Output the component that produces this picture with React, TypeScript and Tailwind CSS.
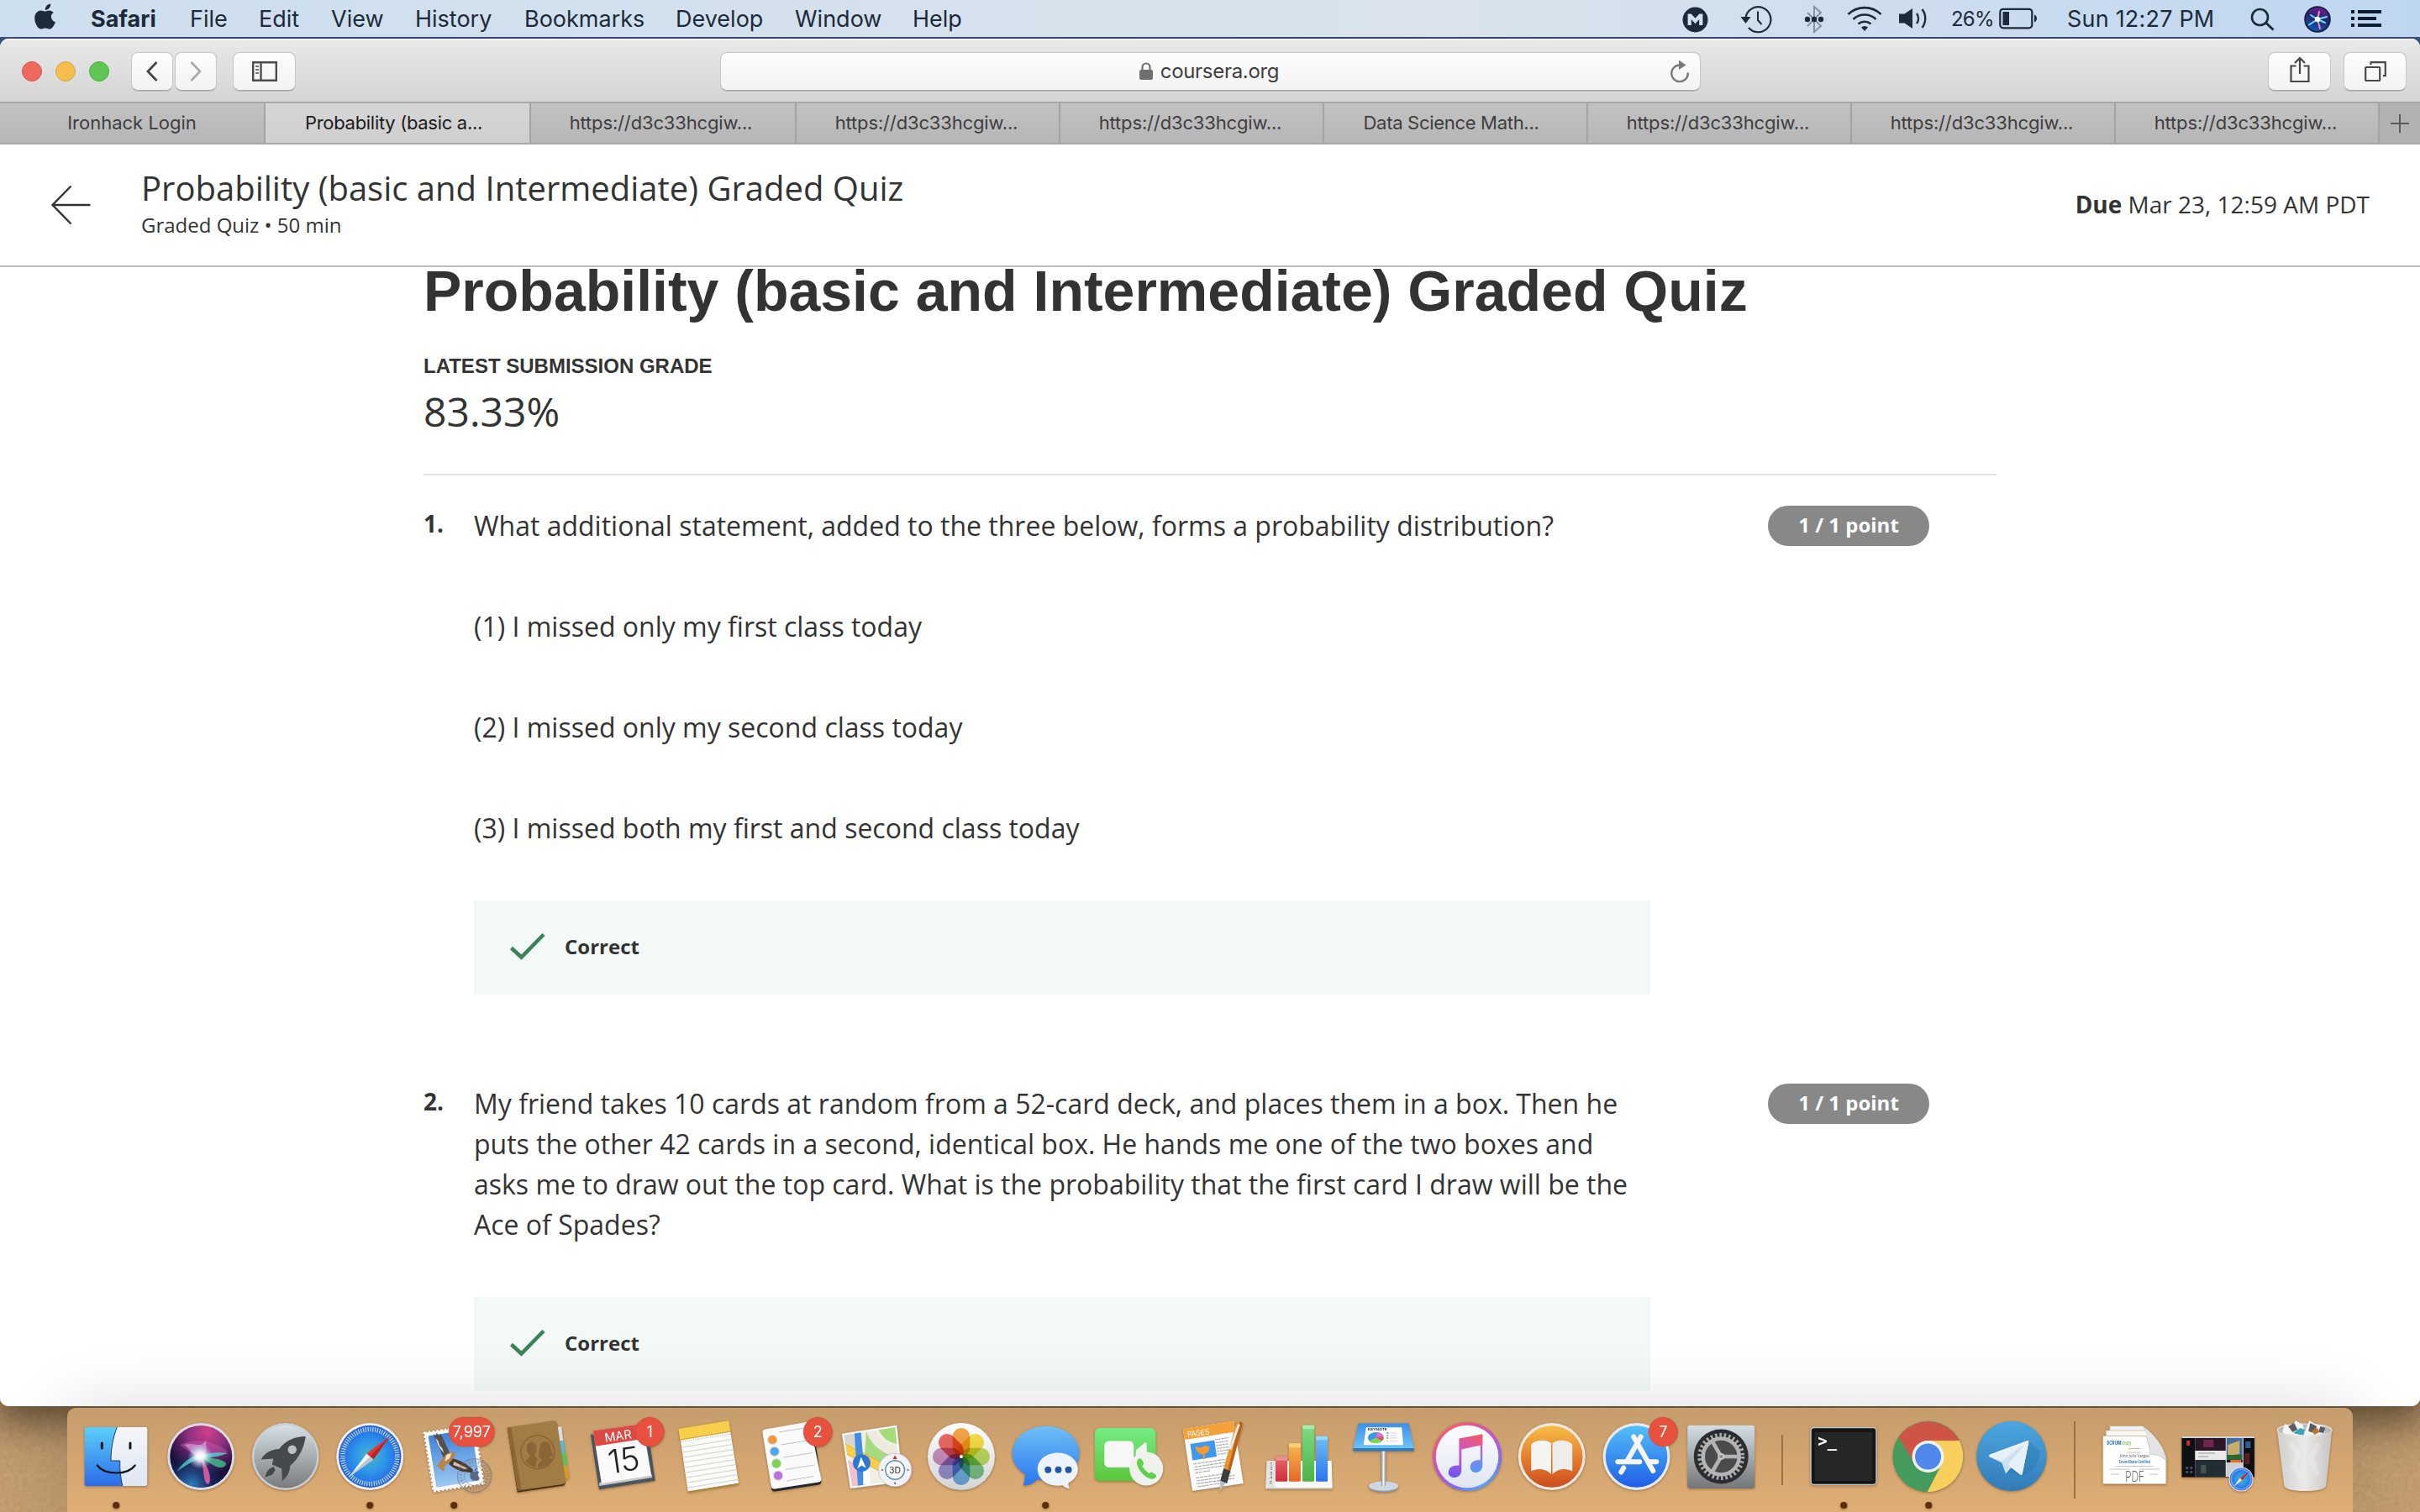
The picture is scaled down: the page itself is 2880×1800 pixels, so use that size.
import React from "react";

const OS = "font-['Open_Sans',sans-serif]";

/* ---------- menu bar ---------- */

const menus: [string, string][] = [
  ["File", "w-[82px]"],
  ["Edit", "w-[86px]"],
  ["View", "w-[100px]"],
  ["History", "w-[130px]"],
  ["Bookmarks", "w-[180px]"],
  ["Develop", "w-[142px]"],
  ["Window", "w-[140px]"],
  ["Help", "w-[80px]"],
];

function SiriGlyph({ cx, cy, r, id }: { cx: number; cy: number; r: number; id: string }) {
  return (
    <g>
      <defs>
        <radialGradient id={id + "a"} cx="0.6" cy="0.1" r="0.7">
          <stop offset="0" stopColor="#d0408c" />
          <stop offset="0.45" stopColor="#8a2f7e" />
          <stop offset="1" stopColor="#160d38" />
        </radialGradient>
        <radialGradient id={id + "b"} cx="0.35" cy="0.95" r="0.6">
          <stop offset="0" stopColor="#2a7fc4" />
          <stop offset="1" stopColor="#101a4a" stopOpacity="0" />
        </radialGradient>
        <radialGradient id={id + "c"}>
          <stop offset="0" stopColor="#fff" />
          <stop offset="0.35" stopColor="#fff" stopOpacity="0.85" />
          <stop offset="1" stopColor="#9be8ff" stopOpacity="0" />
        </radialGradient>
      </defs>
      <g transform={`translate(${cx} ${cy}) scale(${r / 37})`}>
        <circle r="37" fill={`url(#${id}a)`} />
        <circle r="37" fill={`url(#${id}b)`} />
        <path d="M-25-14C-10-22 16-20 32-6 22 0 8 0 0 0-8 0-14-6-25-14Z" fill="#c85bb0" opacity="0.45" />
        <path d="M-29 18C-20 4-6-4 4-3 14-5 26-5 32-4 22 0 10 2 2 2-8 4-18 10-29 18Z" fill="#4fdcd6" opacity="0.75" />
        <path d="M0 0C12 2 24 2 30 8 28 18 14 12 0 0Z" fill="#3ccf8f" opacity="0.75" />
        <path d="M0 0C8 12 14 26 9 33 2 32 4 16 0 0Z" fill="#f05fa8" opacity="0.85" />
        <path d="M-20-14C-8-18 0-8 6-20 6-8 8-2 0 2-10 0-12-8-20-14Z" fill="#e7c4ee" opacity="0.5" />
        <circle cx="-1" cy="0" r="15" fill={`url(#${id}c)`} />
      </g>
    </g>
  );
}

/* Compact Siri mark used in the menu bar. */
function SiriSmall() {
  return (
    <svg className="mt-[-1px] ml-[34px] h-8 w-8" viewBox="0 0 32 32">
      <defs>
        <linearGradient id="mss" x1="0.600" y1="0" x2="0.300" y2="1">
          <stop offset="0" stopColor="#6a1f8e" />
          <stop offset="0.450" stopColor="#26256e" />
          <stop offset="1" stopColor="#1457b8" />
        </linearGradient>
      </defs>
      <circle cx="16" cy="16" r="15.800" fill="#101f3c" />
      <circle cx="16" cy="16" r="14" fill="url(#mss)" />
      <path d="M16 16L6 22.500M16 16l11-3M16 16L8 11M16 16l9 4" stroke="#5fe3ee" strokeWidth="2" strokeLinecap="round" />
      <path d="M16 16l3 11M16 16l2-9" stroke="#f08ad0" strokeWidth="2" strokeLinecap="round" />
      <circle cx="16" cy="16" r="3.200" fill="#fff" />
    </svg>
  );
}

function MenuBar() {
  return (
    <div className="relative z-10 flex h-11 shrink-0 items-center bg-linear-to-r from-[#cddeee] via-[#dae3ec] via-60% to-[#bfd6f0] pt-[2px] font-[Inter,sans-serif] text-[27px] text-[#1c2b3b]">
      <svg className="ml-[41px] mt-[-6px] h-8 w-7" viewBox="0 0 28 32" fill="#1c2b3b">
        <path d="M19.2 0.5c.3 2-.6 3.900-1.700 5.200-1.100 1.300-2.900 2.300-4.600 2.200-.300-1.900.600-3.900 1.600-5.100C15.700 1.500 17.600.600 19.200.5zM25 22.500c-.700 1.600-1 2.300-1.900 3.700-1.200 2-3 4.400-5.200 4.400-1.900 0-2.400-1.300-5-1.200-2.600 0-3.200 1.300-5.100 1.200-2.200 0-3.900-2.200-5.100-4.200C-.700 21 -.400 14.400 2.200 11.300c1.500-1.800 3.500-2.900 5.500-2.900 2 0 3.300 1.200 5 1.200 1.600 0 2.600-1.200 5-1.200 1.800 0 3.700 1 5 2.600-4.400 2.500-3.700 8.900 2.300 11.500z" />
      </svg>
      <span className="ml-[39px] w-[118px] font-bold">Safari</span>
      {menus.map(([m, w]) => (
        <span key={m} className={w}>
          {m}
        </span>
      ))}
      <div className="ml-auto flex h-full items-center pr-[46px]">
        <svg className="h-[31px] w-[31px]" viewBox="0 0 31 31">
          <circle cx="15.500" cy="15.500" r="15" fill="#1c2b3b" />
          <path d="M8.700 22V10.500h1l5.800 6.500 5.800-6.500h1V22" fill="none" stroke="#d5e0ee" strokeWidth="4.200" />
        </svg>
        <svg className="ml-[38px] h-[34px] w-[38px]" viewBox="0 0 38 34" fill="none" stroke="#1c2b3b" strokeWidth="2.200">
          <path d="M6.500 15.500A15 15 0 1 1 10 27" />
          <path d="M0.500 14h12L6.500 22z" fill="#1c2b3b" stroke="none" />
          <path d="M21 7.500v10.500l4.500 5" strokeWidth="2" />
        </svg>
        <svg className="ml-[38px] h-[34px] w-6" viewBox="0 0 24 34">
          <path d="M4 9l16 16-8 7V2l8 7L4 25" fill="none" stroke="#8493a4" strokeWidth="2" />
          <g fill="#1c2b3b">
            <circle cx="4" cy="17" r="3.200" />
            <circle cx="12" cy="17" r="3.200" />
            <circle cx="20" cy="17" r="3.200" />
          </g>
        </svg>
        <svg className="mt-[-3px] ml-[26px] h-8 w-[44px]" viewBox="0 0 44 32" fill="none" stroke="#1c2b3b" strokeWidth="2.600">
          <path d="M2.500 11a28 28 0 0 1 39 0M8.500 17a19.500 19.500 0 0 1 27 0M14.500 22.500a11.500 11.500 0 0 1 15 0" />
          <path d="M22 31l-4-4.500a6 6 0 0 1 8 0z" fill="#1c2b3b" stroke="none" />
        </svg>
        <svg className="ml-[19px] mt-[-2px] h-7 w-9" viewBox="0 0 36 28" fill="none" stroke="#1c2b3b" strokeWidth="2.400">
          <path d="M0 8.500h6.500L16 2v24l-9.500-6.500H0z" fill="#1c2b3b" stroke="none" />
          <path d="M21 8a10 10 0 0 1 0 12M27.500 3a18 18 0 0 1 0 22" />
        </svg>
        <span className="ml-[26px] w-[57px] text-[24px] tracking-[-0.8px]">26%</span>
        <svg className="mt-[-2px] h-[26px] w-[48px]" viewBox="0 0 48 26">
          <rect x="1.300" y="1.800" width="38" height="22.500" rx="3.500" fill="none" stroke="#1c2b3b" strokeWidth="2.200" />
          <rect x="4.500" y="5" width="7.500" height="16" fill="#1c2b3b" />
          <path d="M42 8.500c4 1 4 8 0 9z" fill="#1c2b3b" />
        </svg>
        <span className="ml-[33px] w-[218px] tracking-[0.2px]">Sun 12:27 PM</span>
        <svg className="h-7 w-[30px]" viewBox="0 0 30 28" fill="none" stroke="#1c2b3b" strokeWidth="2.600">
          <circle cx="11.500" cy="11.500" r="9.500" />
          <path d="M18.500 18l9 8.500" strokeWidth="3" />
        </svg>
        <SiriSmall />
        <svg className="mt-[-2px] ml-6 h-5 w-9" viewBox="0 0 36 20" fill="#0c1c30">
          <path d="M0 0h4v4H0zM0 8h4v4H0zM0 16h4v4H0zM8 0h28v4H8zM8 8h22v4H8zM8 16h28v4H8z" />
        </svg>
      </div>
    </div>
  );
}

/* ---------- Safari toolbar and tabs ---------- */

const btn =
  "flex h-[46px] items-center justify-center rounded-[8px] border border-[#c6c6c6] border-b-[#a9a9a9] bg-linear-to-b from-[#fdfdfd] to-[#f3f3f3] shadow-[0_1px_0_rgba(0,0,0,0.12)]";

function Toolbar() {
  return (
    <div className="flex h-[75px] items-center bg-linear-to-b from-[#e8e8e8] to-[#d5d5d5] border-t-2 border-[#f4f4f4] pl-[26px] pr-[16px]">
      <div className="flex gap-4">
        <i className="h-6 w-6 rounded-full border border-[#d9544b] bg-[#ee6a5f]" />
        <i className="h-6 w-6 rounded-full border border-[#dba23c] bg-[#f5bf4f]" />
        <i className="h-6 w-6 rounded-full border border-[#4caf3d] bg-[#61c554]" />
      </div>
      <div className="ml-[26px] flex gap-[2px]">
        <div className={`${btn} w-[50px]`}>
          <svg className="h-6 w-4" viewBox="0 0 16 24" fill="none" stroke="#484848" strokeWidth="2.800">
            <path d="M13.500 1L3 12l10.500 11" />
          </svg>
        </div>
        <div className={`${btn} w-[50px]`}>
          <svg className="h-6 w-4" viewBox="0 0 16 24" fill="none" stroke="#a8a8a8" strokeWidth="2.600">
            <path d="M2.500 1L13 12 2.500 23" />
          </svg>
        </div>
      </div>
      <div className={`${btn} ml-[19px] w-[75px]`}>
        <svg className="h-6 w-[30px]" viewBox="0 0 30 24" fill="none" stroke="#4c4c4c" strokeWidth="2.400">
          <path d="M1.200 1.200h27.600v21.600H1.200zM10.500 1.200v21.600" />
          <path d="M4 6h4M4 10h4M4 14h4" strokeWidth="1.600" />
        </svg>
      </div>
      <div className={`${btn} relative ml-[505px] w-[1167px] gap-[9px] pr-[3px] font-[Inter,sans-serif] text-[24px] tracking-[-0.3px] text-[#404040]`}>
        <svg className="h-[22px] w-4" viewBox="0 0 16 22">
          <rect y="9" width="16" height="12" rx="2" fill="#6f6f6f" />
          <path d="M3.500 9V6a4.500 4.500 0 0 1 9 0v3" fill="none" stroke="#6f6f6f" strokeWidth="2.200" />
        </svg>
        <span>coursera.org</span>
        <svg className="absolute right-[12px] top-[8px] h-[28px] w-6" viewBox="0 0 24 28">
          <path d="M12 6.500A9.800 9.800 0 1 0 21.800 15.500" fill="none" stroke="#7a7a7a" strokeWidth="2.400" />
          <path d="M11 .5v11.500l8.500-5.500z" fill="#7a7a7a" />
        </svg>
      </div>
      <div className={`${btn} ml-auto w-[75px]`}>
        <svg className="mt-[-4px] h-8 w-6" viewBox="0 0 24 32" fill="none" stroke="#484848" strokeWidth="2.200">
          <path d="M7.500 11.500H1.500v18.500h21V11.500H16.500M12 21V2.500M6 8l6-6 6 6" />
        </svg>
      </div>
      <div className={`${btn} ml-[15px] w-[75px]`}>
        <svg className="h-6 w-[26px]" viewBox="0 0 26 24" fill="none" stroke="#484848" strokeWidth="2.200">
          <rect x="1.200" y="7" width="17" height="16" rx="1" />
          <path d="M7.500 4V1.200h17.300v16H22" />
        </svg>
      </div>
    </div>
  );
}

const tabs: [string, string][] = [
  ["Ironhack Login", "w-[316px]"],
  ["Probability (basic a...", "w-[316px] pr-[9px] tracking-[-0.3px]"],
  ["https://d3c33hcgiw...", "w-[316px] pr-[5px] tracking-[-0.15px]"],
  ["https://d3c33hcgiw...", "w-[314px] pr-[3px] tracking-[-0.15px]"],
  ["https://d3c33hcgiw...", "w-[314px] pr-[3px] tracking-[-0.15px]"],
  ["Data Science Math...", "w-[314px] pr-[10px] tracking-[-0.3px]"],
  ["https://d3c33hcgiw...", "w-[314px] pr-[3px] tracking-[-0.15px]"],
  ["https://d3c33hcgiw...", "w-[314px] pr-[3px] tracking-[-0.15px]"],
  ["https://d3c33hcgiw...", "w-[314px] pr-[3px] tracking-[-0.15px]"],
];

function Tabs() {
  return (
    <div className="flex h-[51px] border-y-2 border-[#a8a8a8] bg-linear-to-b from-[#c2c2c2] to-[#b6b6b6] font-[Inter,sans-serif] text-[22px]">
      {tabs.map(([t, w], i) => (
        <div
          key={i}
          className={
            "flex items-center justify-center border-r-2 border-[#a4a4a4] " + w + " " +
            (i === 1 ? "bg-linear-to-b from-[#d6d6d6] to-[#cfcfcf] text-[#1c1c1c]" : "text-[#3e3e3e]")
          }
        >
          {t}
        </div>
      ))}
      <div className="flex flex-1 items-center justify-center bg-[#b2b2b2]">
        <svg className="h-6 w-6" viewBox="0 0 24 24" stroke="#5a5a5a" strokeWidth="2">
          <path d="M12 1v22M1 12h22" />
        </svg>
      </div>
    </div>
  );
}

/* ---------- page ---------- */

function Question({ n, children, className = "" }: { n: string; children: React.ReactNode; className?: string }) {
  return (
    <div className={`flex items-start ${className}`}>
      <span className="w-[60px] text-[28px] leading-[42px] font-bold">{n}</span>
      <div className="w-[1400px]">
        {children}
        <div className="mt-[62px] flex h-28 items-center bg-[#f3f9f7] pl-[42px]">
          <svg className="mt-[-2px] h-[34px] w-11" viewBox="0 0 44 34" fill="none" stroke="#3d8158" strokeWidth="4.600">
            <path d="M2.500 18.500L14.500 29.500 41 2.500" />
          </svg>
          <span className="ml-[22px] pb-[2px] text-[24px] font-bold">Correct</span>
        </div>
      </div>
      <div className="ml-[140px] flex h-12 w-48 items-center justify-center rounded-full bg-[#888888] pb-[2px] text-[24px] font-bold text-white">
        1 / 1 point
      </div>
    </div>
  );
}

function Page() {
  return (
    <div className={`flex min-h-0 flex-1 flex-col bg-white text-[#333333] ${OS}`}>
      <div className="flex h-[146px] shrink-0 border-b-2 border-[#bbbbbb]">
        <svg className="ml-[60px] mt-[48px] h-12 w-12" viewBox="0 0 48 48" fill="none" stroke="#333" strokeWidth="2.400">
          <path d="M24.500 1.500L2.500 24l22 22.500M2.500 24H47.500" />
        </svg>
        <div className="ml-[60px] pt-[25px]">
          <div className="text-[40px] leading-[54px] whitespace-nowrap">
            Probability (basic and Intermediate) Graded Quiz
          </div>
          <div className="mt-[-1px] text-[24px] leading-[36px]">Graded Quiz • 50 min</div>
        </div>
        <div className="mr-[60px] ml-auto text-[28px] leading-[142px]">
          <b>Due</b> Mar 23, 12:59 AM PDT
        </div>
      </div>
      <div className="ml-[504px] w-[1872px]">
        <h1 className="font-['Liberation_Sans',sans-serif] text-[68px] leading-[56px] font-bold whitespace-nowrap">
          Probability (basic and Intermediate) Graded Quiz
        </h1>
        <div className="mt-[44px] font-['Liberation_Sans',sans-serif] text-[24px] leading-[36px] font-bold">
          LATEST SUBMISSION GRADE
        </div>
        <div className="mt-[4px] text-[48px] leading-[64px]">83.33%</div>
        <div className="mt-[42px] h-[2px] bg-[#e1e1e1]" />
        <Question n="1." className="mt-9">
          <div className="flex flex-col gap-[72px] text-[32px] leading-[48px]">
            <p>What additional statement, added to the three below, forms a probability distribution?</p>
            <p>(1) I missed only my first class today</p>
            <p>(2) I missed only my second class today</p>
            <p>(3) I missed both my first and second class today</p>
          </div>
        </Question>
        <Question n="2." className="mt-[106px]">
          <p className="text-[32px] leading-[48px] whitespace-nowrap">
            My friend takes 10 cards at random from a 52-card deck, and places them in a box. Then he
            <br />
            puts the other 42 cards in a second, identical box. He hands me one of the two boxes and
            <br />
            asks me to draw out the top card. What is the probability that the first card I draw will be the
            <br />
            Ace of Spades?
          </p>
        </Question>
      </div>
    </div>
  );
}

/* ---------- dock ---------- */

function Badge({ x, w = 34, label }: { x: number; w?: number; label: string }) {
  return (
    <g>
      <rect x={x - w / 2} y="11.500" width={w} height="34.500" rx="17.200" fill="#e9513f" stroke="#c9483a" strokeWidth="0.700" />
      <text x={x} y="35.300" fontSize="18" textAnchor="middle" fill="#fff" fontFamily="Inter">
        {label}
      </text>
    </g>
  );
}

function SafariGlyph({ cx, cy, r, id }: { cx: number; cy: number; r: number; id: string }) {
  return (
    <g transform={`translate(${cx} ${cy}) scale(${r / 40})`}>
      <defs>
        <radialGradient id={id}>
          <stop offset="0" stopColor="#45b8c4" />
          <stop offset="0.500" stopColor="#2c96ea" />
          <stop offset="1" stopColor="#2462e0" />
        </radialGradient>
      </defs>
      <circle r="40" fill="#eef0f3" />
      <circle r="37.200" fill={`url(#${id})`} />
      <circle r="32.500" fill="none" stroke="#fff" strokeOpacity="0.850" strokeWidth="5.500" strokeDasharray="1 1.836" />
      <path d="M24-24.500L-4-3.500 4 3.500z" fill="#e8352c" />
      <path d="M24-24.500L4 3.500 0 0z" fill="#b8221e" />
      <path d="M-24.500 24L-4-3.500 4 3.500z" fill="#f6f6f6" />
      <path d="M-24.500 24L4 3.500 0 0z" fill="#bfc5cc" />
    </g>
  );
}

const petals = ["#f4982c", "#f6dd2c", "#b9d84a", "#6cc07a", "#5ea8e0", "#8d86cc", "#c983b8", "#ea5450"];

const icons: Record<string, React.ReactNode> = {
  finder: (
    <>
      <defs>
        <linearGradient id="fi" x1="0" y1="0" x2="0" y2="1">
          <stop offset="0" stopColor="#5bd0f9" />
          <stop offset="1" stopColor="#2c6ce8" />
        </linearGradient>
        <linearGradient id="fj" x1="0" y1="0" x2="0" y2="1">
          <stop offset="0" stopColor="#f5f6f8" />
          <stop offset="1" stopColor="#dde6f3" />
        </linearGradient>
      </defs>
      <rect x="12.500" y="23" width="74.500" height="70" rx="2.500" fill="url(#fi)" />
      <path d="M51 23C46 36 43.500 50 43.800 63H54.500C54 73 55.500 84 57.500 93H84.500a2.500 2.500 0 0 0 2.500-2.500V25.500a2.500 2.500 0 0 0-2.500-2.500z" fill="url(#fj)" />
      <path d="M51 23C46 36 43.500 50 43.800 63H54.500C54 73 55.500 84 57.500 93" fill="none" stroke="#1d3b66" strokeWidth="1" />
      <path d="M33 42v6M66.700 42v6" stroke="#10161f" strokeWidth="3" strokeLinecap="round" />
      <path d="M27.500 68.500C36 80.500 64 80.500 72.400 68.500" fill="none" stroke="#10161f" strokeWidth="2.200" strokeLinecap="round" />
    </>
  ),
  siri: (
    <>
      <circle cx="50" cy="58" r="40" fill="#dcdce2" />
      <SiriGlyph cx={50} cy={58} r={37} id="ds" />
    </>
  ),
  launchpad: (
    <>
      <defs>
        <linearGradient id="lp" x1="0" y1="0" x2="0" y2="1">
          <stop offset="0" stopColor="#d5e0e6" />
          <stop offset="1" stopColor="#7a7b7c" />
        </linearGradient>
      </defs>
      <circle cx="50.500" cy="58" r="40" fill="#c9d0d5" />
      <circle cx="50.500" cy="58" r="37.500" fill="url(#lp)" />
      <path d="M74.500 34C62 34 50 39 43 49 34 49 25 54 21.500 61.500L36 60.500 34.500 67.500 46 72.500 46.500 87C52 83 56 76 56 69 66 61 73 47 74.500 34z" fill="#46494c" />
      <path d="M36.500 70C30 72 27 77 26.500 82.500L35 79.500 38.500 74z" fill="#46494c" />
      <circle cx="58.500" cy="49.800" r="5.200" fill="#b8c1c6" />
    </>
  ),
  safari: <SafariGlyph cx={50} cy={58} r={40} id="sf" />,
  mail: (
    <>
      <defs>
        <linearGradient id="ml" x1="0" y1="0" x2="0" y2="1">
          <stop offset="0" stopColor="#3f82d8" />
          <stop offset="1" stopColor="#9cc9f2" />
        </linearGradient>
      </defs>
      <g transform="rotate(-9 50 60)">
        <rect x="20" y="25" width="60" height="70" fill="#fbfbfb" stroke="#fbfbfb" strokeWidth="3" strokeDasharray="2.600 2.200" />
        <rect x="24" y="29" width="52" height="62" fill="url(#ml)" />
      </g>
      <path d="M25.500 31l3 2 1-3.500 2.500 4 2-2.500c4 7 8 16 11.500 24l-4.500 8c-3-2-6-8-7.500-14-3-5-6-11-8-18z" fill="#54504c" />
      <path d="M28 36l3 3 2 6 3 3 2 6-4-5-3-5z" fill="#e6e1da" />
      <path d="M46 60c8 1 18 5 27 14l-2 3c-8 0-18-2-27-10z" fill="#4b3a2c" />
      <path d="M50 64l16 8-3 1-14-5z" fill="#cfc4b5" />
      <path d="M40 56c3-3 8-4 12-2-1 4-4 6-5 9l-8 6-1 7-4-3-4-4c3-4 6-9 10-13z" fill="#b98447" />
      <path d="M41 56l6-2-2 6-6 4z" fill="#efe2c8" />
      <g fill="none" stroke="#6b6f7c" strokeOpacity="0.550">
        <circle cx="74.300" cy="80.700" r="20" strokeWidth="1.400" />
        <circle cx="74.300" cy="80.700" r="16" strokeWidth="4" strokeDasharray="1.400 2.200" />
        <circle cx="74.300" cy="80.700" r="12" strokeWidth="1" />
      </g>
      <path d="M74.500 76c2.500-1.500 4.500-.5 5.500.8-2.500 1.800-2 5 .7 6.200-1 3-3 4.500-6 3.400-3 1-5.700-2-5.700-5.600s2.700-6.200 5.500-4.800zM74.500 75.200c0-2 1-3.500 3-4 .2 2-1 3.800-3 4z" fill="#46536b" fillOpacity="0.800" />
      <Badge x={71} w={54} label="7,997" />
    </>
  ),
  contacts: (
    <>
      <path d="M71 23l6-1 2 17-6 1z" fill="#dcdcdc" />
      <path d="M74 40l5.500-1 2 14.500-5 1z" fill="#54b9d8" />
      <path d="M76 54.500l6-1 2 15-6 1z" fill="#56c65a" />
      <path d="M78 69.500l6-1 2 15.500-6 1z" fill="#d79a24" />
      <path d="M12.700 25L24.500 100.700 80 92.500 82 88z" fill="#4a3216" />
      <path d="M12.700 23.500L66 15.500q5-.5 6 4L82 86q0 4-4 5L25 98.500z" fill="#a17c44" />
      <path d="M12.700 23.500L17 23 29.500 98l-4.500.5z" fill="#8a6733" />
      <circle cx="48.600" cy="52.700" r="20" fill="none" stroke="#8a6535" strokeWidth="1.500" />
      <g fill="#8a6535">
        <path d="M41 41c4.500 0 6.500 3.500 6.500 8 0 3.500-1 5-2.500 7-.5 3 3 3.500 4 5-2 2-3 5-2.500 9.500-5 0-9-3-12-6.500 0-3 5-4 5-7.500-2.500-2-4-4-4-8s2-7.500 5.500-7.500z" />
        <path d="M57 40c5 0 7 4 7.500 8s1.500 7 3 9c-2 1-4 1.500-5 2 1 2 3 1.500 4 2.500-4 6-10 10-18 9.500 0-6 5-7 6-10-2-1-4-1-5-2 2-5 0-19 7.500-19z" />
      </g>
    </>
  ),
  calendar: (
    <>
      <path d="M11.700 31.700L21.700 97.300 88.500 86.700 80 27z" fill="#4b545c" />
      <path d="M22 93l63-10-1-4-62 10z" fill="#c9c9c9" />
      <path d="M14.600 27.300L73.500 19 84 80.500 24.600 90z" fill="#fafafa" />
      <path d="M14.600 27.300L73.500 19 77 36.500 17.200 45.700z" fill="#db4a43" />
      <g transform="rotate(-8 50 60)" textAnchor="middle" fontFamily="Inter">
        <text x="48" y="38" fontSize="14.500" fill="#fff">MAR</text>
        <text x="50.500" y="76" fontSize="39" fontWeight="300" fill="#222" letterSpacing="-0.500">15</text>
      </g>
      <Badge x={82} label="1" />
    </>
  ),
  notes: (
    <>
      <path d="M17.200 36L76.800 27 86.800 89.700 26.500 99.500z" fill="#fbfbf8" />
      <path d="M26.500 99.500L86.800 89.700v1.500l-60.500 9.500z" fill="#a88a3c" />
      <path d="M15 25L75 15.300 77 27.300 17 37.300z" fill="#f7cf4a" />
      <path d="M17 37.300L77 27.300l.3 1.500-60 10z" fill="#d9a92e" />
      <path d="M18 40.500L78 31" stroke="#999" strokeWidth="0.800" strokeDasharray="1 1.500" />
      <path d="M19 47l60-9.500M20 53l60-9.500M21 59l60-9.500M22 65l60-9.500M23 71l60-9.500M24 77l60-9.500M25 83l60-9.500M26 89l60-9.500M26 95l60-9.500" stroke="#c9c9c6" strokeWidth="0.900" />
    </>
  ),
  reminders: (
    <>
      <path d="M17 30l9 67q1 3 4 2.500L82 91.500q3.500-1 3-4L78 40z" fill="#23262b" />
      <path d="M15.300 30q-.5-4 3-4.500L66 17.200q5-1 6 4L85 84q.5 4-3 4.500L30 96.500q-4 .5-4.500-3z" fill="#fafafb" />
      <path d="M35 29l32-5.500M37 44l35-5.500M40 59l35-5.500M42 73.500l35-5.500M44 87l32-5.500" stroke="#c4c4c4" strokeWidth="1" />
      <g strokeWidth="1.200" stroke="#dedede">
        <circle cx="27" cy="38" r="5.700" fill="#f6963a" />
        <circle cx="29.500" cy="52" r="5.700" fill="#4ba7f3" />
        <circle cx="31.700" cy="66.300" r="5.700" fill="#7dd353" />
        <circle cx="33.800" cy="80.700" r="5.700" fill="#bb72da" />
      </g>
      <Badge x={81} label="2" />
    </>
  ),
  maps: (
    <>
      <defs>
        <clipPath id="mp">
          <path d="M11 32.500L72 23.200 79 86 21 93.500z" />
        </clipPath>
      </defs>
      <path d="M8.700 30.700L74 20.700 81.500 88 18.700 96z" fill="#fdfdfd" stroke="#c9c2b8" strokeWidth="0.500" />
      <g clipPath="url(#mp)">
        <rect width="100" height="110" fill="#f2eee6" />
        <path d="M8 28l14-1 3 20-15-6z" fill="#d9d6cf" />
        <path d="M11 60l22 10 5 26H15z" fill="#f2bfca" />
        <path d="M38 20c4 16 14 28 42 36v30L36 55z" fill="#a6da80" />
        <path d="M36 22c4 20 20 36 50 38V48C66 48 50 38 46 20z" fill="#efeae0" />
        <path d="M50 18c3 16 14 26 34 26V14z" fill="#a3dc78" />
        <path d="M10 41L84 80v11L10 53z" fill="#f8ce4c" stroke="#d8a93a" strokeWidth="0.800" />
        <path d="M23 24h8l6 72h-9z" fill="#418fde" />
        <path d="M34 72h8v25h-8z" fill="#fff" />
      </g>
      <circle cx="32.200" cy="65.700" r="10.500" fill="#2f75d6" />
      <path d="M31.500 58.500l6 13-5.500-3-5 4z" fill="#fff" />
      <circle cx="71.900" cy="74" r="19.700" fill="#f1f2f6" stroke="#c4c6cc" strokeWidth="0.800" />
      <circle cx="71.900" cy="74" r="11.300" fill="#fbfbfd" stroke="#5e8aac" strokeWidth="1.400" />
      <path d="M71.900 56.500l2.600 4.500h-5.200z" fill="#d22" />
      <path d="M55.500 74h2.500M86 74h2.500M71.900 88.500v2.500" stroke="#333" strokeWidth="1.200" />
      <text x="71.900" y="77.800" fontSize="10.500" textAnchor="middle" fill="#333" fontFamily="Inter">3D</text>
    </>
  ),
  photos: (
    <>
      <defs>
        <linearGradient id="ph" x1="0" y1="0" x2="0" y2="1">
          <stop offset="0" stopColor="#fff" />
          <stop offset="1" stopColor="#d2d3d5" />
        </linearGradient>
      </defs>
      <circle cx="50.700" cy="58" r="40" fill="url(#ph)" />
      <g transform="translate(50.700 58)">
        {petals.map((c, i) => (
          <rect key={c} x="-10.300" y="-34" width="20.600" height="34" rx="10.300" fill={c} fillOpacity="0.880" transform={`rotate(${i * 45})`} className="mix-blend-multiply" />
        ))}
        <circle r="2" fill="#fff" />
      </g>
    </>
  ),
  messages: (
    <>
      <defs>
        <linearGradient id="ms1" x1="0" y1="0" x2="0" y2="1">
          <stop offset="0" stopColor="#6fc0f5" />
          <stop offset="1" stopColor="#2a76ef" />
        </linearGradient>
      </defs>
      <path d="M50.500 21.700C28 21.700 10.500 36 10.500 54c0 11 6 19 15 25 .5 6-1 10-2 13.500 7 0 13-3 17-7.500 3 .7 6 1 10 1C73 86 90.500 72 90.500 54S73 21.700 50.500 21.700z" fill="url(#ms1)" />
      <path d="M64.500 53.500c-14 0-24 9-24 19.500s10 19.700 24 19.700c2 0 4-.2 6-.5 2.500 2.500 5 3.700 8.500 3.800-1.500-2-2-3.500-1.800-6.500 7-3.500 11.300-9.500 11.300-16.500 0-10.500-10-19.500-24-19.500z" fill="#edf3fc" />
      <g fill="#2357a2">
        <circle cx="53" cy="73.700" r="4" />
        <circle cx="65.200" cy="73.700" r="4" />
        <circle cx="77.300" cy="73.700" r="4" />
      </g>
    </>
  ),
  facetime: (
    <>
      <defs>
        <linearGradient id="ft" x1="0" y1="0" x2="0" y2="1">
          <stop offset="0" stopColor="#74ec84" />
          <stop offset="1" stopColor="#5bc63c" />
        </linearGradient>
      </defs>
      <rect x="8.700" y="24" width="72.500" height="63.300" rx="6" fill="url(#ft)" />
      <rect x="20" y="39.500" width="35" height="31.500" rx="5.500" fill="#f7f7f7" />
      <path d="M57.500 50.500L68 41.500q2.500-1 2.500 1.500V68L57.500 58z" fill="#f2f2f2" />
      <circle cx="70" cy="72.500" r="20" fill="#eef1ec" />
      <path d="M60 61.500c2-2 3.500-1.500 4.500 0l2 3.500c.7 1.500 0 2.500-1.500 4 2 4 5 7 8.500 9 1.500-1.500 2.500-2 4-1l3.500 2.500c1.200 1 1.200 2.500-.5 4-4 3-10 0-14.500-4.500S56 65.500 60 61.500z" fill="#5fd04d" />
    </>
  ),
  pages: (
    <>
      <path d="M12.500 25L73 15.700 84.500 90 23.800 99z" fill="#fcfcfc" />
      <path d="M12.500 25L73 15.700 75 28.500 14.500 38z" fill="#f5a13a" />
      <text transform="translate(18.500 35) rotate(-8.500)" fontSize="9.500" fill="#fff" fontFamily="Liberation Sans" textLength="26" lengthAdjust="spacingAndGlyphs">PAGES</text>
      <path d="M21.300 43L50 38.500 52.800 58 24 62.500z" fill="#3e97f0" />
      <path d="M27 46c4 0 5 2 8 1 3-3 7-2 9-1 1 4-2 8-6 9l1 6-2 .3-1-6c-5 0-8-4-9-9.300z" fill="#f39a2d" />
      <g stroke="#a5a5a5" strokeWidth="1.100">
        <path d="M51 38l16-2.500M52 41.500l15-2.300M52 45l15-2.300M53 48.500l14-2.100M53 52l14-2.100M54 55.500l12-1.800" strokeDasharray="3 .700" />
        <path d="M25 67l40-6M26 70.500l40-6M26.500 74l38-5.700M27 77.500l18-2.700M28 83.500l42-6.300M29 87l45-6.700M29 90.500l45-6.700M30 94l26-4" strokeDasharray="4 .800" />
      </g>
      <path d="M76 18q5-4 8 1L69 75l-8-3z" fill="#e9942e" />
      <path d="M80 16.500q3 0 4 2.500L69 75l-3-1z" fill="#b9641a" />
      <path d="M78 19l2.500 1L70 50l-3-1z" fill="#e6ebf0" />
      <path d="M61 72l8 3-4 15-8-3z" fill="#3c3c3c" />
      <path d="M57 87l6.500 2.500L56 100z" fill="#b9bec4" />
    </>
  ),
  numbers: (
    <>
      <defs>
        <linearGradient id="n1" x1="0" y1="0" x2="0" y2="1"><stop offset="0" stopColor="#e4686e" /><stop offset="1" stopColor="#cf2f3c" /></linearGradient>
        <linearGradient id="n2" x1="0" y1="0" x2="0" y2="1"><stop offset="0" stopColor="#f5b94e" /><stop offset="1" stopColor="#e2682a" /></linearGradient>
        <linearGradient id="n3" x1="0" y1="0" x2="0" y2="1"><stop offset="0" stopColor="#7ddc86" /><stop offset="1" stopColor="#4fb244" /></linearGradient>
        <linearGradient id="n4" x1="0" y1="0" x2="0" y2="1"><stop offset="0" stopColor="#6cc3f5" /><stop offset="1" stopColor="#2a74ec" /></linearGradient>
      </defs>
      <path d="M12.600 63H89.400l1.100 32.700H11z" fill="#f8f8f8" />
      <path d="M12.600 63h9v32H11.500z" fill="#e4e4e6" />
      <path d="M11 95.700h79.500v1H11z" fill="#bdbdbd" />
      <rect x="22.600" y="57.700" width="14.300" height="30" rx="1.500" fill="url(#n1)" />
      <rect x="38.700" y="42.300" width="14" height="45.400" rx="1.500" fill="url(#n2)" />
      <rect x="54.800" y="20.700" width="14" height="67" rx="1.500" fill="url(#n3)" />
      <rect x="70.800" y="33.700" width="14" height="54" rx="1.500" fill="url(#n4)" />
      <rect x="22.600" y="57.700" width="14.300" height="5" rx="1" fill="#f08d90" />
      <rect x="38.700" y="42.300" width="14" height="5" rx="1" fill="#f8cf7a" />
      <rect x="54.800" y="20.700" width="14" height="4.500" rx="1" fill="#a3efa6" />
      <rect x="70.800" y="33.700" width="14" height="4.500" rx="1" fill="#92d8fa" />
      <g fontSize="4.500" fill="#444" fontFamily="Inter" textAnchor="middle">
        <text x="17.500" y="68.500">1</text>
        <text x="17.500" y="74">2</text>
        <text x="17.500" y="79.500">3</text>
        <text x="17.500" y="85">4</text>
        <text x="17" y="91">5</text>
      </g>
    </>
  ),
  keynote: (
    <>
      <defs>
        <linearGradient id="kn" x1="0" y1="0" x2="0" y2="1"><stop offset="0" stopColor="#3a8fee" /><stop offset="1" stopColor="#6cc2f6" /></linearGradient>
        <linearGradient id="kp" x1="0" y1="0" x2="1" y2="0"><stop offset="0" stopColor="#8b9197" /><stop offset="0.500" stopColor="#f2f4f6" /><stop offset="1" stopColor="#8b9197" /></linearGradient>
      </defs>
      <ellipse cx="50.300" cy="94.500" rx="17.500" ry="6" fill="#8f9aa6" />
      <ellipse cx="50.300" cy="93" rx="17.500" ry="5.700" fill="#ced8e2" />
      <rect x="47.500" y="51" width="5.500" height="42" fill="url(#kp)" />
      <path d="M20.300 18.500H80.300L86.500 48H14.200z" fill="url(#kn)" />
      <path d="M14.200 48H86.500v3.500H14.200z" fill="#2c7cc0" />
      <path d="M29.500 23.300H72l1.800 20.900H26.500z" fill="#fff" />
      <text x="31.500" y="27.200" fontSize="4" fontWeight="700" fill="#333" fontFamily="Inter" textLength="23" lengthAdjust="spacingAndGlyphs">KEYNOTE</text>
      <ellipse cx="41" cy="35.500" rx="9.500" ry="6.500" fill="#3f97e8" />
      <path d="M41 35.500L43 29a9.500 6.500 0 0 1 7.300 5z" fill="#d66fe0" />
      <path d="M41 35.500l9.400-1a9.500 6.500 0 0 1-1.500 4.500z" fill="#f0573a" />
      <path d="M41 35.500L33 39.500a9.500 6.500 0 0 0 15.500 0z" fill="#7ed65a" />
      <path d="M54 30h2M54 33h2" stroke="#3f97e8" strokeWidth="1.500" />
      <path d="M54 36h2" stroke="#f0573a" strokeWidth="1.500" />
      <path d="M54 39.500h2" stroke="#e9c73e" strokeWidth="1.500" />
      <path d="M58 30h8M58 33h8M58 36h9M58 39.500h9" stroke="#ccc" strokeWidth="0.900" />
    </>
  ),
  itunes: (
    <>
      <defs>
        <linearGradient id="it" x1="0.200" y1="0" x2="0.800" y2="1"><stop offset="0" stopColor="#f8635c" /><stop offset="0.450" stopColor="#c94fd0" /><stop offset="0.750" stopColor="#7a6cf5" /><stop offset="1" stopColor="#44bdf9" /></linearGradient>
        <linearGradient id="iu" x1="0" y1="0" x2="0" y2="1"><stop offset="0" stopColor="#fdfdfd" /><stop offset="1" stopColor="#dfe6f2" /></linearGradient>
        <linearGradient id="iv" gradientUnits="userSpaceOnUse" x1="60" y1="32" x2="40" y2="84"><stop offset="0" stopColor="#f25a68" /><stop offset="0.500" stopColor="#c455d6" /><stop offset="1" stopColor="#6a57f2" /></linearGradient>
        <linearGradient id="iw" gradientUnits="userSpaceOnUse" x1="64" y1="40" x2="62" y2="78"><stop offset="0" stopColor="#e05a92" /><stop offset="0.500" stopColor="#8a7de8" /><stop offset="1" stopColor="#4d9bf2" /></linearGradient>
      </defs>
      <circle cx="49.800" cy="58" r="41" fill="url(#it)" />
      <circle cx="49.800" cy="58" r="37.300" fill="url(#iu)" />
      <path d="M65.500 42v20.500c-3-1-12 0-12 8 0 4 3 6.500 6.500 6.500 5 0 8-4 8-8.500V31.500z" fill="url(#iw)" />
      <path d="M40.200 36.500L68 31.300V44L43 49.500V74c0 5-3.500 9-8.500 9-4 0-7-2.500-7-6 0-7 6-8.500 12.700-8.500z" fill="url(#iv)" />
    </>
  ),
  ibooks: (
    <>
      <defs>
        <linearGradient id="ib" x1="0" y1="0" x2="0" y2="1"><stop offset="0" stopColor="#f7bd48" /><stop offset="0.600" stopColor="#e0762a" /><stop offset="1" stopColor="#cc4c20" /></linearGradient>
      </defs>
      <circle cx="49.500" cy="58" r="40" fill="#efe8e2" />
      <circle cx="49.500" cy="58" r="36.800" fill="url(#ib)" />
      <path d="M25 43.500C31 37.500 42 37.500 48.700 42V79C42 72 32 71.500 25 75.500z" fill="#f6f4f2" />
      <path d="M74 43.500C68 37.500 57 37.500 50.300 42V79C57 72 67 71.500 74 75.500z" fill="#efedea" />
    </>
  ),
  appstore: (
    <>
      <defs>
        <linearGradient id="as" x1="0" y1="0" x2="0" y2="1"><stop offset="0" stopColor="#55bff9" /><stop offset="1" stopColor="#1f5fe6" /></linearGradient>
      </defs>
      <circle cx="50.300" cy="58" r="40" fill="#e6eaf0" />
      <circle cx="50.300" cy="58" r="36.800" fill="url(#as)" />
      <g stroke="#f4f6fa" strokeWidth="6" strokeLinecap="round">
        <path d="M47 34.500L70 75" />
        <path d="M55.500 34.500L39 63.500" />
        <path d="M35 71.500L32 76.500" />
        <path d="M28 64.300H54M66 64.300H74" />
      </g>
      <Badge x={82} label="7" />
    </>
  ),
  prefs: (
    <>
      <defs>
        <linearGradient id="sp" x1="0" y1="0" x2="0" y2="1"><stop offset="0" stopColor="#d3dee4" /><stop offset="1" stopColor="#757677" /></linearGradient>
      </defs>
      <rect x="10" y="20.700" width="80" height="75" rx="3" fill="url(#sp)" />
      <circle cx="50" cy="58" r="32.500" fill="#2b2d2f" />
      <circle cx="50" cy="58" r="25.500" fill="none" stroke="#a8aaac" strokeWidth="5" strokeDasharray="2.600 2.740" />
      <circle cx="50" cy="58" r="21.500" fill="#4a4b4d" stroke="#b2b4b6" strokeWidth="4.500" />
      <path d="M50 58L39 39M50 58L39 77M50 58H72" stroke="#b2b4b6" strokeWidth="4.500" />
      <circle cx="50" cy="58" r="4" fill="#c6c8ca" />
      <circle cx="50" cy="58" r="2" fill="#8a8c8e" />
    </>
  ),
  terminal: (
    <>
      <rect x="10.800" y="23.500" width="78" height="68" rx="4" fill="#161616" stroke="#c6c6c6" strokeWidth="1.500" />
      <rect x="15.500" y="29" width="68.500" height="58" fill="#262626" />
      <text x="19" y="45.500" fontSize="19" fontWeight="700" fill="#fff" fontFamily="DejaVu Sans Mono">&gt;_</text>
    </>
  ),
  chrome: (
    <>
      <circle cx="49.300" cy="58" r="42" fill="#449b5d" />
      <path d="M49.300 39H86.500A42 42 0 0 1 48.500 100L65 68z" fill="#f8cf5c" />
      <path d="M14.500 35A42 42 0 0 1 86.500 39H49.300V58L31.500 63.500z" fill="#ce5446" />
      <circle cx="49.300" cy="58" r="19" fill="#f3f3f3" />
      <circle cx="49.300" cy="58" r="15.500" fill="#5087ec" />
    </>
  ),
  telegram: (
    <>
      <defs>
        <linearGradient id="tg" x1="0" y1="0" x2="0" y2="1"><stop offset="0" stopColor="#4ca6de" /><stop offset="1" stopColor="#317cb8" /></linearGradient>
      </defs>
      <circle cx="48.700" cy="57.500" r="41.700" fill="url(#tg)" />
      <path d="M69 39l14 13q-4 24-22 28L42 78z" fill="#2a6ea6" opacity="0.300" />
      <path d="M21.900 57.500q-.5-1.500 1.500-2.300L67.500 39q2-.5 1.700 1.500L61.500 78.500q-.7 2-2.500 1L48 71z" fill="#f3f8fc" />
      <path d="M21.900 58.300L36.800 64.700 41.800 78.300 48 71.500 45 67 65 44z" fill="#cfe0ee" />
      <path d="M22 58l15 5.500L68 40 45 67l15 12.500q1.500 0 1.500-1L69 40z" fill="#e6f0f8" />
    </>
  ),
  pdf: (
    <>
      <path d="M18.600 21.700H58L85.800 60V90H18.600z" fill="#f2f2f2" stroke="#c0b8ac" strokeWidth="0.700" />
      <path d="M14 27H62L85 62V90H14z" fill="#f7f7f7" stroke="#c9b994" strokeWidth="0.700" />
      <path d="M10.500 33.500H62L66 48 85.500 62V90.500H10.500z" fill="#fefefe" stroke="#cdbb8f" strokeWidth="0.900" />
      <path d="M58 21.700C70 30 84 46 85.800 62 80 57 72 55 65.500 55.500 68 44 64 30 58 21.700z" fill="#e4e4e6" stroke="#bbb" strokeWidth="0.500" />
      <text x="15" y="44" fontSize="6" fontWeight="700" fontFamily="Inter" fill="#2b6fb0" textLength="29" lengthAdjust="spacingAndGlyphs">SCRUM<tspan fill="#67b33e" fontWeight="400">study</tspan></text>
      <g textAnchor="middle" fontFamily="Open Sans" fontSize="3.800" fill="#888">
        <text x="48" y="58.500" fontSize="4.500" fill="#555">John Julio Vargas</text>
        <text x="48" y="65.500" fontSize="4.700" fontWeight="700" fill="#2b7fb8" textLength="37" lengthAdjust="spacingAndGlyphs">Scrum Master Certified</text>
      </g>
      <path d="M41 48.500h14" stroke="#d59a3e" strokeWidth="0.800" />
      <path d="M39 53h17M26 69.500h44M18 73h24M54 73h24M20 79h10M66 79h10" stroke="#c2c2c2" strokeWidth="1" />
      <text x="48" y="88" fontSize="18" textAnchor="middle" fontFamily="Open Sans" fontWeight="300" fill="#4a4a4a" textLength="22" lengthAdjust="spacingAndGlyphs">PDF</text>
    </>
  ),
  window: (
    <>
      <rect x="4.200" y="34" width="86.500" height="48.500" fill="#0f1014" />
      <rect x="4.200" y="34" width="86.500" height="2" fill="#d6d6d8" />
      <rect x="20" y="36" width="37" height="46" fill="#e9e9ea" />
      <rect x="20" y="36" width="37" height="15" fill="#2b1626" />
      <path d="M30 38h12v9H30z" fill="#8c2c62" opacity="0.700" />
      <rect x="20" y="62" width="37" height="20" fill="#222d33" />
      <path d="M27 68h6v10h-6z" fill="#56705f" opacity="0.600" />
      <path d="M24 54h20M24 58h12" stroke="#999" strokeWidth="1" />
      <rect x="57" y="36" width="20" height="26" fill="#456a9c" />
      <path d="M59 44l14-5v16l-14 2z" fill="#c9ae6a" />
      <path d="M57 56h20v6H57z" fill="#2e6632" />
      <rect x="62" y="62" width="13" height="3" fill="#e06a2b" />
      <rect x="57" y="65" width="20" height="17" fill="#cfcfd2" />
      <path d="M57 36v46M77 36v46" stroke="#e9e9ea" strokeWidth="1" />
      <rect x="10" y="39" width="4" height="6" fill="#c92f2f" />
      <path d="M9 70h3v3H9zM14 70h3v3h-3zM9 75h3v3H9zM14 75h3v3h-3z" fill="#444a55" />
      <rect x="80" y="40" width="6" height="8" fill="#2d5d96" />
      <rect x="79" y="54" width="6" height="13" fill="#5b1d22" />
      <SafariGlyph cx={74.800} cy={85} r={14.500} id="sg" />
    </>
  ),
  trash: (
    <>
      <defs>
        <linearGradient id="tr" x1="0" y1="0" x2="1" y2="0"><stop offset="0" stopColor="#d4d3d1" /><stop offset="0.500" stopColor="#efefee" /><stop offset="1" stopColor="#c9c8c6" /></linearGradient>
      </defs>
      <ellipse cx="49.400" cy="26.500" rx="32.500" ry="7.500" fill="#bdbbb8" stroke="#ececec" strokeWidth="1.200" />
      <path d="M23 28l3-9 8 3 5-7 8 5 3 8 5-13 8 5 6 0 5 9-8 4H26z" fill="#f4f4f4" />
      <path d="M30 22l7-4 4 8-6 3zM56 18l8 4-3 8-7-2zM68 22l6 2-2 6-6-1z" fill="#5a5d62" />
      <path d="M36 30l8-6 6 2-2 7z" fill="#3aa5b8" />
      <path d="M58 27l7-3 2 5-6 3z" fill="#c7713a" />
      <path d="M16.800 27.500C24 34 75 34 82 27.500L75 92q-1 7-25 7t-25-7z" fill="url(#tr)" fillOpacity="0.960" />
      <path d="M32 42l10 14-6 14 10 12M66 42L57 60l8 20" fill="none" stroke="#fff" strokeOpacity="0.180" strokeWidth="7" strokeLinejoin="round" />
    </>
  ),
};

function Item({ name, running }: { name: string; running?: boolean }) {
  return (
    <svg className="h-[124px] w-[100.5px] shrink-0 drop-shadow-[0_1px_1.500px_rgba(60,30,0,0.400)]" viewBox="-0.250 0 100.500 124">
      {icons[name]}
      {running && <circle cx="50" cy="116" r="4.100" fill="#5c2f06" />}
    </svg>
  );
}

const apps: [string, boolean?][] = [
  ["finder", true], ["siri"], ["launchpad"], ["safari", true], ["mail", true], ["contacts"], ["calendar"], ["notes"],
  ["reminders"], ["maps"], ["photos"], ["messages", true], ["facetime"], ["pages"], ["numbers"], ["keynote"],
  ["itunes"], ["ibooks"], ["appstore"], ["prefs"],
];

function Dock() {
  return (
    <div className="relative mx-auto mt-[2px] flex h-[124px] w-[2720px] shrink-0 rounded-t-[10px] bg-linear-to-b from-[#c69d6d] to-[#dfae75] pl-2 shadow-[0_0_80px_rgba(0,0,0,0.150)]">
      {apps.map(([n, r]) => (
        <Item key={n} name={n} running={r} />
      ))}
      <div className="flex w-[46px] shrink-0 justify-center pt-8">
        <i className="h-[60px] w-[2px] bg-[#9d7243]" />
      </div>
      <Item name="terminal" running />
      <Item name="chrome" running />
      <Item name="telegram" />
      <div className="flex w-[46px] shrink-0 justify-center pt-4">
        <i className="h-[92px] w-[2px] bg-[#9d7243]" />
      </div>
      <Item name="pdf" />
      <Item name="window" />
      <Item name="trash" />
    </div>
  );
}

export default function App() {
  return (
    <div className="relative flex h-[1800px] w-[2880px] flex-col overflow-hidden bg-[#47628c]">
      <svg className="absolute bottom-0 left-0 h-[140px] w-full">
        <defs>
          <filter id="grain" x="0" y="0" width="100%" height="100%">
            <feTurbulence type="fractalNoise" baseFrequency="0.180" numOctaves="3" seed="4" />
            <feColorMatrix values="0 0 0 0 0.400  0 0 0 0 0.270  0 0 0 0 0.130  0.900 0 0 0 -0.250" />
          </filter>
        </defs>
        <rect width="100%" height="100%" fill="#c79f72" />
        <rect width="100%" height="100%" filter="url(#grain)" />
      </svg>
      <MenuBar />
      <div className="relative mt-[2px] h-[1628px] shrink-0 rounded-[10px] shadow-[0_10px_50px_10px_rgba(0,0,0,0.550)]">
        <div className="flex h-full flex-col overflow-hidden rounded-[10px] bg-white">
          <Toolbar />
          <Tabs />
          <Page />
        </div>
      </div>
      <Dock />
    </div>
  );
}
